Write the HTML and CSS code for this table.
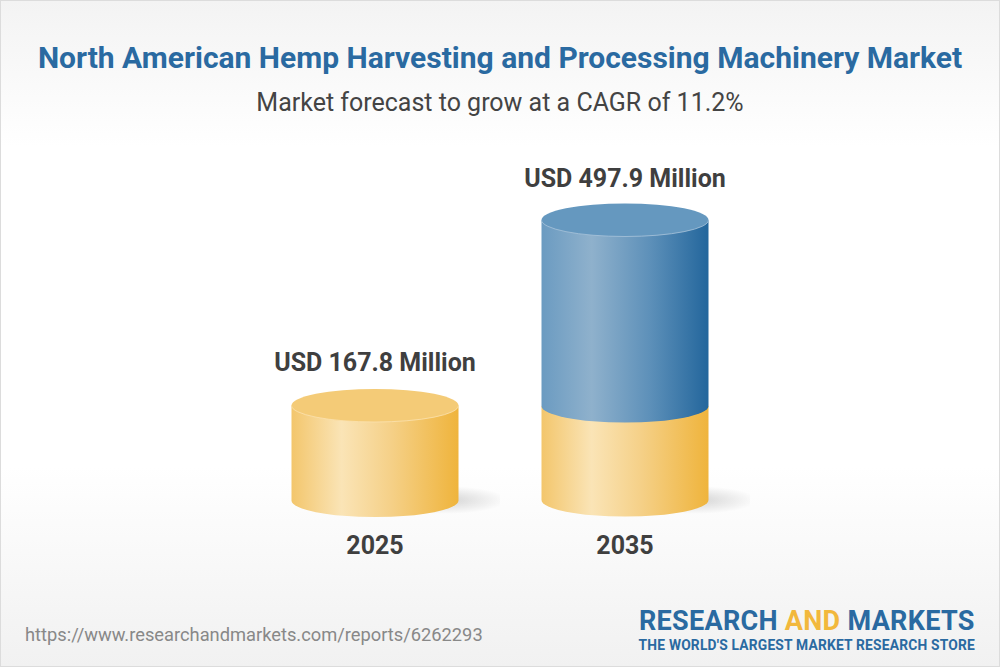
FILE: index.html
```html
<!DOCTYPE html>
<html>
<head>
<meta charset="utf-8">
<link rel="stylesheet" href="styles.css">
</head>
<body>
<div class="frame">
  <header class="head">
    <h1 class="title">North American Hemp Harvesting and Processing Machinery Market</h1>
    <p class="subtitle">Market forecast to grow at a CAGR of 11.2%</p>
  </header>
  <main class="chart">
    <div class="col">
      <div class="value">USD 167.8 Million</div>
      <svg class="cyl" width="250" height="130" viewBox="0 0 250 130">
        <defs>
          <linearGradient id="yside" x1="0" x2="1" y1="0" y2="0">
            <stop offset="0" stop-color="#f3c66c"/>
            <stop offset="0.3" stop-color="#fae4b6"/>
            <stop offset="0.6" stop-color="#f5d087"/>
            <stop offset="1" stop-color="#efb43c"/>
          </linearGradient>
          <radialGradient id="shadow" cx="0.5" cy="0.5" r="0.5">
            <stop offset="0" stop-color="#000" stop-opacity="0.16"/>
            <stop offset="1" stop-color="#000" stop-opacity="0"/>
          </radialGradient>
        </defs>
        <ellipse cx="195" cy="111" rx="62" ry="14" fill="url(#shadow)"/>
        <path d="M41.5 16.5 V111.5 A83.5 16.5 0 0 0 208.5 111.5 V16.5 Z" fill="url(#yside)"/>
        <ellipse cx="125" cy="16.5" rx="83.5" ry="16.5" fill="#f4cb77"/>
        <path d="M41.5 16.5 A83.5 16.5 0 0 0 208.5 16.5" fill="none" stroke="#fbe2b0" stroke-width="0.8"/>
      </svg>
      <div class="year">2025</div>
    </div>
    <div class="col">
      <div class="value value-tall">USD 497.9 Million</div>
      <svg class="cyl" width="250" height="316" viewBox="0 0 250 316">
        <defs>
          <linearGradient id="yside2" x1="0" x2="1" y1="0" y2="0">
            <stop offset="0" stop-color="#f3c66c"/>
            <stop offset="0.3" stop-color="#fae4b6"/>
            <stop offset="0.6" stop-color="#f5d087"/>
            <stop offset="1" stop-color="#efb43c"/>
          </linearGradient>
          <linearGradient id="bside" x1="0" x2="1" y1="0" y2="0">
            <stop offset="0" stop-color="#6b9bc1"/>
            <stop offset="0.3" stop-color="#8fb1cc"/>
            <stop offset="0.65" stop-color="#5d90b9"/>
            <stop offset="1" stop-color="#23669c"/>
          </linearGradient>
          <radialGradient id="shadow2" cx="0.5" cy="0.5" r="0.5">
            <stop offset="0" stop-color="#000" stop-opacity="0.16"/>
            <stop offset="1" stop-color="#000" stop-opacity="0"/>
          </radialGradient>
        </defs>
        <ellipse cx="195" cy="297" rx="62" ry="14" fill="url(#shadow2)"/>
        <path d="M41.5 203 V297 A83.5 16.5 0 0 0 208.5 297 V203 Z" fill="url(#yside2)"/>
        <path d="M41.5 17 V203 A83.5 16.5 0 0 0 208.5 203 V17 Z" fill="url(#bside)"/>
        <ellipse cx="125" cy="17" rx="83.5" ry="16.5" fill="#6598bf"/>
        <path d="M41.5 17 A83.5 16.5 0 0 0 208.5 17" fill="none" stroke="#a9c4da" stroke-width="0.8"/>
      </svg>
      <div class="year">2035</div>
    </div>
  </main>
  <footer class="foot">
    <div class="url">https://www.researchandmarkets.com/reports/6262293</div>
    <div class="logo">
      <div class="logo-main">RESEARCH <span class="and">AND</span> MARKETS</div>
      <div class="logo-tag">THE WORLD'S LARGEST MARKET RESEARCH STORE</div>
    </div>
  </footer>
</div>
</body>
</html>
```

FILE: styles.css
```css
* { box-sizing: border-box; }
html, body { margin: 0; padding: 0; }
body { font-family: Roboto, "Liberation Sans", Arial, sans-serif; }
.frame {
  width: 1000px;
  height: 667px;
  border: 1px solid #dcdcdc;
  background: linear-gradient(to bottom, #f3f3f3 0%, #ffffff 22%, #ffffff 70%, #f1f1f1 100%);
  display: flex;
  flex-direction: column;
}
.head { text-align: center; padding-top: 40px; }
.title {
  margin: 0;
  font-size: 30px;
  line-height: 34px;
  font-weight: 700;
  color: #2a6aa1;
}
.subtitle {
  margin: 13px 0 0;
  font-size: 25px;
  line-height: 30px;
  color: #444444;
}
.chart {
  display: flex;
  justify-content: center;
  align-items: flex-end;
  height: 443px;
}
.col {
  width: 250px;
  display: flex;
  flex-direction: column;
  align-items: center;
}
.value {
  font-size: 25px;
  line-height: 30px;
  font-weight: 700;
  color: #3f3f3f;
  margin-bottom: 11px;
}
.value-tall { margin-bottom: 9px; }
.cyl { display: block; }
.year {
  font-size: 25px;
  line-height: 30px;
  font-weight: 700;
  color: #3f3f3f;
  margin-top: 12px;
}
.foot {
  flex: 1;
  display: flex;
  justify-content: space-between;
  align-items: flex-end;
  padding: 0 24px 13px 24px;
}
.url {
  font-size: 18.3px;
  line-height: 22px;
  color: #888888;
  margin-bottom: 7px;
}
.logo { text-align: center; }
.logo-main {
  font-size: 27px;
  line-height: 28px;
  font-weight: 700;
  color: #2a6aa1;
  letter-spacing: 0.3px;
}
.and { color: #f2b83c; }
.logo-tag {
  margin-top: 2px;
  font-size: 13.8px;
  line-height: 16px;
  font-weight: 700;
  color: #2a6aa1;
  letter-spacing: 0.2px;
}
```
